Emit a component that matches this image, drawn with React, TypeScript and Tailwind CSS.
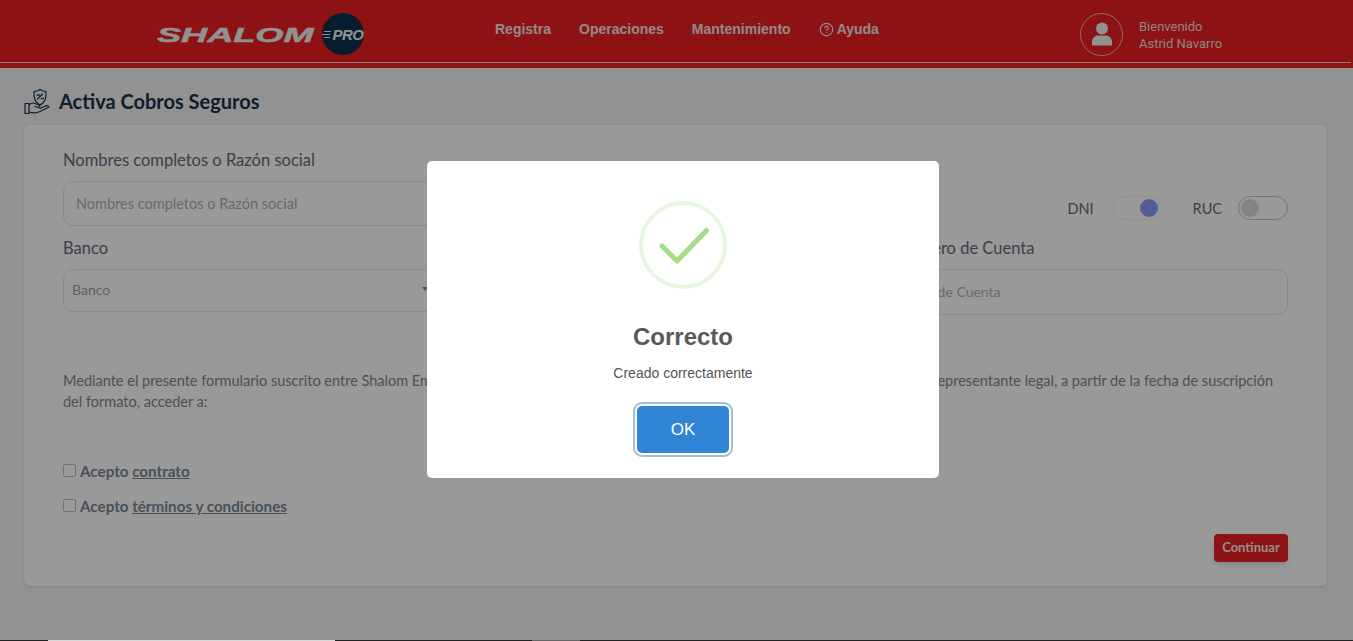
import React from "react";
import { CircleHelp } from "lucide-react";

const bodyFont = "font-['Lato','Noto_Sans',sans-serif]";

const Toggle = ({ on }: { on: boolean }) => (
  <div className={`relative h-[24px] w-[50px] rounded-full border ${on ? "border-[#f0f0f0]" : "border-[#c4c4c4]"}`}>
    <span className={`absolute top-[2px] h-[18px] w-[18px] rounded-full ${on ? "right-[2px] bg-[#8c9cf5]" : "left-[2px] bg-[#dcdcdc]"}`} />
  </div>
);

const Logo = () => (
  <div className="flex w-[338px] items-center">
    <div className="w-[165px] origin-left scale-x-[1.72] whitespace-nowrap font-['Liberation_Sans',sans-serif] text-[21px] font-bold italic leading-none text-[#f2f2f2] [-webkit-text-stroke:0.5px_#f2f2f2]">
      SHALOM
    </div>
    <div className="flex h-[42px] w-[42px] items-center justify-center gap-[1px] rounded-full bg-[#0d2f4b]">
      <svg width="9" height="9" viewBox="0 0 9 9" className="mt-[1px]">
        <path d="M2 1.500h7M0 4.500h8M2 7.500h6" stroke="#f2f2f2" strokeWidth="1" />
      </svg>
      <span className="font-['Liberation_Sans',sans-serif] text-[15px] font-bold italic leading-none tracking-[-0.5px] text-[#f2f2f2]">PRO</span>
    </div>
  </div>
);

const HandShield = () => (
  <svg width="26" height="27" viewBox="0 0 26 27" fill="none" stroke="#17324f" strokeWidth="1.2" strokeLinejoin="round" strokeLinecap="round" className="shrink-0">
    <path d="M16 1.500c2 1.400 4 2 6 2 0 5 .4 10.500-6 13.500-6.400-3-6-8.500-6-13.500 2 0 4-.6 6-2z" />
    <path d="M13.500 11l5-5M13 7.500c.6-1 2-1 2.400-.2M17.300 10.500c.6.600 1.800.300 2.200-.6" />
    <path d="M1 15.500h4v10H1zM5 17c2-2 4-2.500 6-1.500l4 1.500c1.500.6 1 2.500-.6 2.300L11 18.500M5 24c5 1.500 8 1 11-.5l9-4.500c-1-1.500-2.500-1.500-4-.8l-5 2.300" />
  </svg>
);

export default function App() {
  return (
    <div className={`relative flex h-[641px] flex-col overflow-hidden bg-[#f3f3f3] ${bodyFont}`}>
      <header className="flex h-[68px] shrink-0 flex-col bg-[#eb1e21]">
        <div className="flex h-[62px] items-center pl-[157px] pt-[6px]">
          <Logo />
          <nav className="flex w-[585px] items-center gap-7 pb-[10px] font-['Liberation_Sans',sans-serif] text-[14px] font-bold text-[#f5e4e4]">
            <span>Registra</span>
            <span>Operaciones</span>
            <span>Mantenimiento</span>
            <span className="flex items-center gap-[3px]">
              <CircleHelp size={15} strokeWidth={2} />
              Ayuda
            </span>
          </nav>
          <div className="flex items-center gap-4">
            <div className="flex h-[43px] w-[43px] items-center justify-center rounded-full border border-[#f5b5b5]">
              <svg width="22" height="24" viewBox="0 0 22 24" fill="#f2f2f2">
                <circle cx="11" cy="6.500" r="6" />
                <path d="M1 23.500v-3.500c0-4 3-6.500 6-6.500h8c3 0 6 2.500 6 6.500v3.500z" />
              </svg>
            </div>
            <div className="pt-[2px] font-['Roboto',sans-serif] text-[13px] leading-[17px] text-[#f5dcdc]">
              <div>Bienvenido</div>
              <div>Astrid Navarro</div>
            </div>
          </div>
        </div>
        <div className="mr-[2px] h-px bg-[#fbc9c9]" />
      </header>

      <main className="flex-1 pl-6 pr-[26px]">
        <div className="flex h-[57px] items-center gap-[9px] pt-[9px]">
          <HandShield />
          <h1 className="text-[20px] font-bold leading-none text-[#17324f]">Activa Cobros Seguros</h1>
        </div>

        <section className="h-[461px] rounded-[6px] bg-white pl-[39px] pr-[39px] pt-[25px] shadow-sm">
          <div className="flex justify-between">
            <div className="w-[560px]">
              <label className="block text-[16.500px] leading-5 text-[#5f6b7a]">Nombres completos o Razón social</label>
              <input
                placeholder="Nombres completos o Razón social"
                className="mt-[11px] h-[45px] w-full rounded-[10px] border border-[#e6e6e6] px-3 text-[14.500px] outline-none placeholder:text-[#aab0b8]"
              />
            </div>
            <div className="flex h-[24px] translate-y-[46px] items-center text-[14.500px] text-[#5f6b7a]">
              <span className="mr-[17px] pt-[2px]">DNI</span>
              <Toggle on />
              <span className="ml-[32px] mr-[16px] pt-[2px]">RUC</span>
              <Toggle on={false} />
            </div>
          </div>

          <div className="mt-[12px] flex justify-between">
            <div className="w-[375px]">
              <label className="block text-[16.500px] leading-5 text-[#5f6b7a]">Banco</label>
              <div className="mt-[11px] flex h-[43px] items-center justify-between rounded-[10px] border border-[#e6e6e6] pb-[3px] pl-2 pr-[9px] text-[14px] text-[#9aa1aa]">
                <span>Banco</span>
                <span className="h-0 w-0 border-x-[3px] border-t-[4px] border-x-transparent border-t-[#888]" />
              </div>
            </div>
            <div className="w-[417px]">
              <label className="block pl-[26px] text-[16.500px] leading-5 text-[#5f6b7a]">Número de Cuenta</label>
              <input
                placeholder="Número de Cuenta"
                className="mt-[11px] h-[46px] w-full rounded-[10px] border border-[#e6e6e6] px-3 pb-[2px] text-[14px] outline-none placeholder:text-[#aab0b8]"
              />
            </div>
          </div>

          <p className="mt-[55px] text-[14.500px] leading-[21px] text-[#7b8794]">
            Mediante el presente formulario suscrito entre Shalom Empresarial y el cliente, quien autoriza y obra por sí mismo o a través de su propio representante legal, a partir de la fecha de suscripción
            <br />
            del formato, acceder a:
          </p>

          <div className="mt-[51px] flex flex-col gap-[19px] text-[15.200px] font-bold leading-4 text-[#7b8794]">
            <label className="flex items-center gap-[4px]">
              <span className="mt-[-2px] h-[13px] w-[13px] rounded-[2px] border border-[#bbbbbb] bg-white" />
              <span>Acepto <u>contrato</u></span>
            </label>
            <label className="flex items-center gap-[4px]">
              <span className="mt-[-2px] h-[13px] w-[13px] rounded-[2px] border border-[#bbbbbb] bg-white" />
              <span>Acepto <u>términos y condiciones</u></span>
            </label>
          </div>

          <div className="mt-[20px] flex justify-end">
            <button className="h-[28px] w-[74px] rounded-[4px] bg-[#eb1e21] text-[13px] font-bold text-[#fbeaea] shadow-md">Continuar</button>
          </div>
        </section>
      </main>

      <div className="absolute inset-0 flex items-center justify-center bg-black/40 pb-[2px] pl-[13px]">
        <div className="flex h-[317px] w-[512px] flex-col items-center rounded-[5px] bg-white pt-[40px] font-['Liberation_Sans',sans-serif]">
          <svg width="88" height="88" viewBox="0 0 88 88" fill="none">
            <circle cx="44" cy="44" r="42" stroke="#a5dc86" strokeOpacity="0.25" strokeWidth="4" />
            <path d="M23 45L38 60L67.500 29.500" stroke="#a5dc86" strokeWidth="5" strokeLinecap="round" strokeLinejoin="round" />
          </svg>
          <h2 className="mt-[34px] text-[24px] font-bold leading-7 text-[#595959]">Correcto</h2>
          <p className="mt-[14px] text-[14px] leading-4 text-[#545454]">Creado correctamente</p>
          <button className="mt-[25px] h-[47px] w-[92px] rounded-[5px] bg-[#3085d6] text-[17px] text-white shadow-[0_0_0_2px_#fff,0_0_0_4px_rgba(48,110,150,0.45)]">
            OK
          </button>
        </div>
      </div>

      <div className="absolute inset-x-0 bottom-0 flex h-px bg-[#222222]">
        <span className="ml-[48px] w-[287px] bg-[#d8d8d8]" />
        <span className="ml-[197px] w-[48px] bg-[#666666]" />
      </div>
    </div>
  );
}
